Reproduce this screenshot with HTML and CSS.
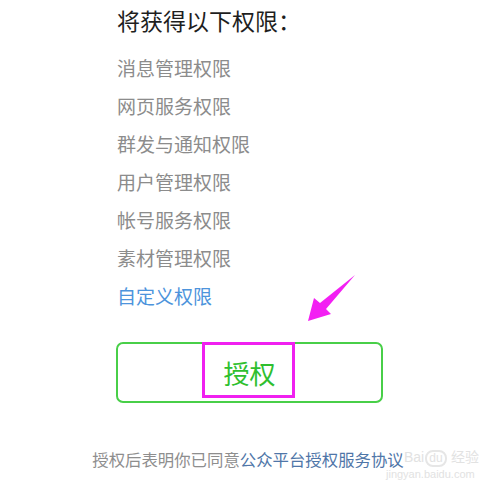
FILE: index.html
```html
<!DOCTYPE html>
<html lang="zh-CN">
<head>
    <meta charset="UTF-8">
    <meta name="viewport" content="width=device-width, initial-scale=1.0">
    <title>授权</title>
    <link rel="stylesheet" href="styles.css">
</head>
<body>
    <div class="page">
        <div class="container">
            <h2 class="title">将获得以下权限：</h2>
            <ul class="perm-list">
                <li>消息管理权限</li>
                <li>网页服务权限</li>
                <li>群发与通知权限</li>
                <li>用户管理权限</li>
                <li>帐号服务权限</li>
                <li>素材管理权限</li>
                <li class="perm-custom">自定义权限</li>
            </ul>
            <button type="button" class="btn-auth">授权</button>
        </div>

        <p class="agreement">授权后表明你已同意<span class="agreement-link">公众平台授权服务协议</span></p>

        <!-- 标注 -->
        <div class="mark-box"></div>
        <svg class="mark-arrow" width="500" height="489" viewBox="0 0 500 489">
            <polygon points="355,275 320,303 314,298 308,321 331,314 326,309" fill="#f31ff3"/>
        </svg>

        <div class="watermark">
            <div class="wm-top">Bai<span class="wm-paw">du</span>经验</div>
            <div class="wm-url">jingyan.baidu.com</div>
        </div>
    </div>
</body>
</html>
```

FILE: styles.css
```css
body {
    margin: 0;
    background: #fff;
    font-family: "Noto Sans CJK SC", "Noto Sans", sans-serif;
}
.page {
    position: relative;
    width: 500px;
    height: 489px;
    overflow: hidden;
}
.container {
    width: 267px;
    margin: 0 auto;
    padding-left: 1px;
}
.title {
    margin: 0;
    font-size: 23px;
    line-height: 40px;
    font-weight: normal;
    color: #1e1e1e;
}
.perm-list {
    list-style: none;
    margin: 9px 0 0;
    padding: 0;
}
.perm-list li {
    font-size: 19px;
    line-height: 38px;
    color: #8c8c8c;
}
.perm-list .perm-custom {
    color: #4d94dc;
}
.btn-auth {
    display: block;
    width: 267px;
    height: 61px;
    margin-top: 27px;
    margin-left: -1px;
    background: #fff;
    border: 2px solid #48cf48;
    border-radius: 7px;
    color: #2fbf2f;
    font-family: inherit;
    font-size: 26px;
    cursor: pointer;
}
.agreement {
    margin: 44px 0 0;
    padding-right: 4px;
    text-align: center;
    font-size: 16.4px;
    line-height: 24px;
    color: #8e8e8e;
}
.agreement-link {
    color: #4f76a8;
}
.mark-box {
    position: absolute;
    left: 202px;
    top: 342px;
    width: 87px;
    height: 50px;
    border: 3px solid #f020f0;
}
.mark-arrow {
    position: absolute;
    left: 0;
    top: 0;
}
.watermark {
    position: absolute;
    left: 404px;
    top: 448px;
    color: #e2e2e2;
    font-family: "Liberation Sans", sans-serif;
}
.wm-top {
    font-size: 14px;
    line-height: 18px;
}
.wm-paw {
    display: inline-block;
    margin: 0 4px 0 1px;
    padding: 0 2px;
    border: 2px solid #e6e6e6;
    border-radius: 8px;
    font-size: 12px;
    line-height: 13px;
}
.wm-url {
    margin-left: -18px;
    font-size: 11px;
    line-height: 14px;
}
```
